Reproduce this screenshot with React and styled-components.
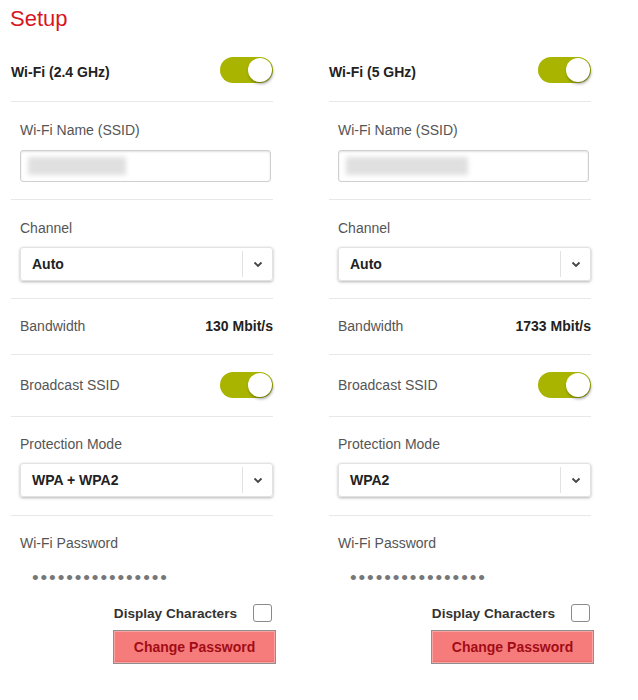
import React from 'react';
import styled, { createGlobalStyle } from 'styled-components';

const GlobalStyle = createGlobalStyle`
  body {
    margin: 0;
    background: #ffffff;
    font-family: "Liberation Sans", Arial, sans-serif;
    color: #222;
  }
`;

const Page = styled.div`
  width: 638px;
  height: 700px;
  padding: 4px 0 0 10px;
  box-sizing: border-box;
`;

const Title = styled.h1`
  margin: 0;
  font-size: 22px;
  line-height: 30px;
  font-weight: normal;
  color: #d9161e;
`;

const Columns = styled.div`
  display: grid;
  grid-template-columns: 262px 262px;
  column-gap: 56px;
  padding-left: 1px;
`;

const Column = styled.div`
  display: flex;
  flex-direction: column;
`;

const Section = styled.div`
  display: flex;
  flex-direction: ${p => (p.stacked ? 'column' : 'row')};
  align-items: ${p => (p.stacked ? 'stretch' : 'center')};
  justify-content: space-between;
  padding: ${p => p.pad || '19px 0 18px'};
  padding-left: ${p => (p.head ? '0' : '9px')};
  border-bottom: ${p => (p.last ? 'none' : '1px solid #e8e8e8')};
`;

const HeadLabel = styled.span`
  font-size: 14px;
  font-weight: bold;
  color: #222;
  line-height: 16px;
  padding-top: 3px;
`;

const Label = styled.span`
  font-size: 14px;
  color: #555;
  line-height: 16px;
`;

const Value = styled.span`
  font-size: 14px;
  font-weight: bold;
  color: #222;
  line-height: 16px;
`;

const Toggle = styled.div`
  width: 53px;
  height: 26px;
  border-radius: 13px;
  background: #a8b400;
  position: relative;
  flex-shrink: 0;

  &::after {
    content: '';
    position: absolute;
    top: 1px;
    right: 1px;
    width: 24px;
    height: 24px;
    border-radius: 50%;
    background: #fff;
    box-shadow: 1px 2px 3px rgba(0, 0, 0, 0.35);
  }
`;

const TextBox = styled.div`
  margin-top: 12px;
  height: 32px;
  width: 251px;
  box-sizing: border-box;
  border: 1px solid #cfcfcf;
  border-radius: 3px;
  box-shadow: inset 0 1px 2px rgba(0, 0, 0, 0.12);
  display: flex;
  align-items: center;
  padding-left: 7px;
`;

const Blur = styled.div`
  height: 18px;
  background: #e0e0e0;
  filter: blur(2.5px);
`;

const Select = styled.div`
  margin-top: 11px;
  height: 34px;
  box-sizing: border-box;
  border: 1px solid #e2e2e2;
  border-radius: 3px;
  box-shadow: 0 1px 3px rgba(0, 0, 0, 0.3);
  display: flex;
  align-items: center;
`;

const SelectValue = styled.span`
  flex: 1;
  padding-left: 11px;
  font-size: 14px;
  font-weight: bold;
  color: #222;
`;

const Chevron = styled.div`
  width: 29px;
  height: 26px;
  border-left: 1px solid #e2e2e2;
  display: flex;
  align-items: center;
  justify-content: center;
`;

const Dots = styled.div`
  margin-top: 19px;
  padding-left: 12px;
  font-size: 19px;
  line-height: 16px;
  letter-spacing: 1.9px;
  color: #777;
`;

const DisplayRow = styled.div`
  margin-top: 18px;
  display: flex;
  justify-content: flex-end;
  align-items: center;
  gap: 16px;
  padding-right: 1px;
`;

const DisplayLabel = styled.span`
  font-size: 13.6px;
  font-weight: bold;
  color: #333;
`;

const Checkbox = styled.div`
  width: 19px;
  height: 18px;
  box-sizing: border-box;
  border: 1px solid #8a8a8a;
  border-radius: 3px;
  background: #fff;
`;

const ButtonRow = styled.div`
  margin-top: 8px;
  display: flex;
  justify-content: flex-end;
  margin-right: -3px;
`;

const ChangeButton = styled.button`
  width: 163px;
  height: 34px;
  border: 1px solid #8f8f8f;
  background: #f67c7c;
  box-shadow: inset 0 0 0 1px #f9a3a3, inset 0 -2px 2px rgba(160, 0, 0, 0.12);
  color: #a20c16;
  font-family: "Liberation Sans", Arial, sans-serif;
  font-size: 14px;
  font-weight: bold;
  padding: 0;
  cursor: pointer;
`;

const ChevronIcon = () => (
  <svg width="10" height="7" viewBox="0 0 10 7">
    <path d="M1.5 1.5 L5 5 L8.5 1.5" fill="none" stroke="#444" strokeWidth="1.8" />
  </svg>
);

const WifiColumn = ({ band, ssidWidth, bandwidth, mode }) => (
  <Column>
    <Section head pad="23px 0 18px">
      <HeadLabel>{band}</HeadLabel>
      <Toggle />
    </Section>
    <Section stacked pad="20px 2px 17px 0">
      <Label>Wi-Fi Name (SSID)</Label>
      <TextBox>
        <Blur style={{ width: ssidWidth }} />
      </TextBox>
    </Section>
    <Section stacked pad="20px 0 17px">
      <Label>Channel</Label>
      <Select>
        <SelectValue>Auto</SelectValue>
        <Chevron>
          <ChevronIcon />
        </Chevron>
      </Select>
    </Section>
    <Section pad="19px 0 20px">
      <Label>Bandwidth</Label>
      <Value>{bandwidth}</Value>
    </Section>
    <Section pad="17px 0 18px">
      <Label>Broadcast SSID</Label>
      <Toggle />
    </Section>
    <Section stacked pad="19px 0 18px">
      <Label>Protection Mode</Label>
      <Select>
        <SelectValue>{mode}</SelectValue>
        <Chevron>
          <ChevronIcon />
        </Chevron>
      </Select>
    </Section>
    <Section stacked last pad="19px 0 0">
      <Label>Wi-Fi Password</Label>
      <Dots>••••••••••••••••</Dots>
      <DisplayRow>
        <DisplayLabel>Display Characters</DisplayLabel>
        <Checkbox />
      </DisplayRow>
      <ButtonRow>
        <ChangeButton>Change Password</ChangeButton>
      </ButtonRow>
    </Section>
  </Column>
);

export default function App() {
  return (
    <>
      <GlobalStyle />
      <Page>
        <Title>Setup</Title>
        <Columns>
          <WifiColumn band="Wi-Fi (2.4 GHz)" ssidWidth={98} bandwidth="130 Mbit/s" mode="WPA + WPA2" />
          <WifiColumn band="Wi-Fi (5 GHz)" ssidWidth={122} bandwidth="1733 Mbit/s" mode="WPA2" />
        </Columns>
      </Page>
    </>
  );
}
